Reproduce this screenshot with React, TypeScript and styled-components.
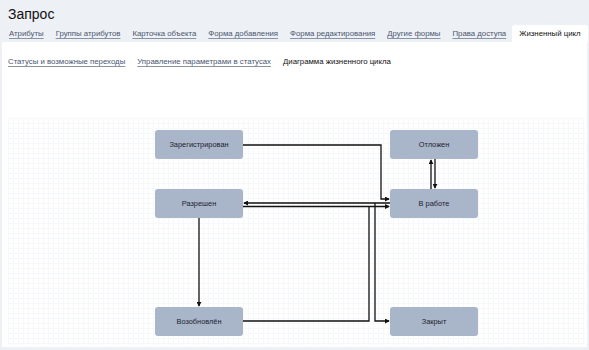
import styled, { createGlobalStyle } from "styled-components";

const GlobalStyle = createGlobalStyle`
  html, body {
    margin: 0;
    padding: 0;
    background: #edf0f4;
    font-family: "Liberation Sans", Arial, sans-serif;
  }
`;

const Page = styled.div`
  width: 589px;
  height: 350px;
  display: flex;
  flex-direction: column;
  overflow: hidden;
`;

const Header = styled.div`
  padding: 6px 0 0 8px;
`;

const Title = styled.h1`
  margin: 0;
  font-size: 14px;
  font-weight: 400;
  color: #111;
  line-height: 16px;
`;

const Tabs = styled.div`
  display: flex;
  align-items: flex-end;
  margin-top: 1px;
  height: 19px;
`;

const Tab = styled.div<{ $active?: boolean }>`
  padding: 0 6px;
  height: 17px;
  line-height: 17px;
  font-size: 7.8px;
  white-space: nowrap;
  border-radius: 3px 3px 0 0;
  color: ${(p) => (p.$active ? "#111" : "#4a5670")};
  background: ${(p) => (p.$active ? "#fff" : "transparent")};
  text-decoration: ${(p) => (p.$active ? "none" : "underline")};
  text-underline-offset: 2px;
  text-decoration-color: #8a93a6;
  &:first-child {
    padding-left: 1px;
  }
  &:last-child {
    padding: 0 7px;
  }
`;

const Panel = styled.div`
  flex: 1;
  margin: 0 2px 3px;
  background: #fff;
  display: flex;
  flex-direction: column;
  padding: 0 2px 2px 6px;
`;

const SubTabs = styled.div`
  display: flex;
  gap: 12px;
  margin-top: 14px;
  height: 12px;
`;

const SubTab = styled.div<{ $active?: boolean }>`
  font-size: 7.8px;
  line-height: 12px;
  white-space: nowrap;
  color: ${(p) => (p.$active ? "#111" : "#4a5670")};
  text-decoration: ${(p) => (p.$active ? "none" : "underline")};
  text-underline-offset: 2px;
  text-decoration-color: #8a93a6;
`;

const Canvas = styled.div`
  position: relative;
  margin-top: 50px;
  flex: 1;
  background-color: #fff;
  background-image: repeating-linear-gradient(
      to right,
      #eceef0 0,
      #eceef0 1px,
      transparent 1px,
      transparent 5px
    ),
    repeating-linear-gradient(
      to bottom,
      #eceef0 0,
      #eceef0 1px,
      transparent 1px,
      transparent 5px
    );
`;

const Fade = styled.div`
  position: absolute;
  inset: 0;
  background: rgba(255, 255, 255, 0.6);
`;

const Node = styled.div<{ $x: number; $y: number }>`
  position: absolute;
  left: ${(p) => p.$x}px;
  top: ${(p) => p.$y}px;
  width: 88px;
  height: 29px;
  border-radius: 3px;
  background: #a9b5c9;
  display: flex;
  align-items: center;
  justify-content: center;
  font-size: 7.4px;
  color: #1d2330;
`;

const Wires = styled.svg`
  position: absolute;
  left: 0;
  top: 0;
  overflow: visible;
`;

const nodes = [
  { label: "Зарегистрирован", x: 147, y: 12 },
  { label: "Отложен", x: 382, y: 12 },
  { label: "Разрешен", x: 147, y: 71 },
  { label: "В работе", x: 382, y: 71 },
  { label: "Возобновлён", x: 147, y: 189 },
  { label: "Закрыт", x: 382, y: 189 },
];

const wires = [
  "M235,27 H373 V81 H381",
  "M382,85 H236",
  "M235,88.5 H381",
  "M235,203 H361 V88.5",
  "M367,85 V203 H381",
  "M191,99 V188",
  "M423,71 V42",
  "M427,41 V70",
];

const tabs = [
  "Атрибуты",
  "Группы атрибутов",
  "Карточка объекта",
  "Форма добавления",
  "Форма редактирования",
  "Другие формы",
  "Права доступа",
];

export default function App() {
  return (
    <Page>
      <GlobalStyle />
      <Header>
        <Title>Запрос</Title>
        <Tabs>
          {tabs.map((t) => (
            <Tab key={t}>{t}</Tab>
          ))}
          <Tab $active>Жизненный цикл</Tab>
        </Tabs>
      </Header>
      <Panel>
        <SubTabs>
          <SubTab>Статусы и возможные переходы</SubTab>
          <SubTab>Управление параметрами в статусах</SubTab>
          <SubTab $active>Диаграмма жизненного цикла</SubTab>
        </SubTabs>
        <Canvas>
          <Fade />
          <Wires width="577" height="229">
            <defs>
              <marker
                id="arr"
                viewBox="0 0 6 6"
                refX="5"
                refY="3"
                markerWidth="5"
                markerHeight="5"
                markerUnits="userSpaceOnUse"
                orient="auto"
              >
                <path d="M0,0 L6,3 L0,6 Z" fill="#111" />
              </marker>
            </defs>
            {wires.map((d, i) => (
              <path
                key={i}
                d={d}
                fill="none"
                stroke="#111"
                strokeWidth="1.3"
                markerEnd={i === 3 ? undefined : "url(#arr)"}
              />
            ))}
          </Wires>
          {nodes.map((n) => (
            <Node key={n.label} $x={n.x} $y={n.y}>
              {n.label}
            </Node>
          ))}
        </Canvas>
      </Panel>
    </Page>
  );
}
